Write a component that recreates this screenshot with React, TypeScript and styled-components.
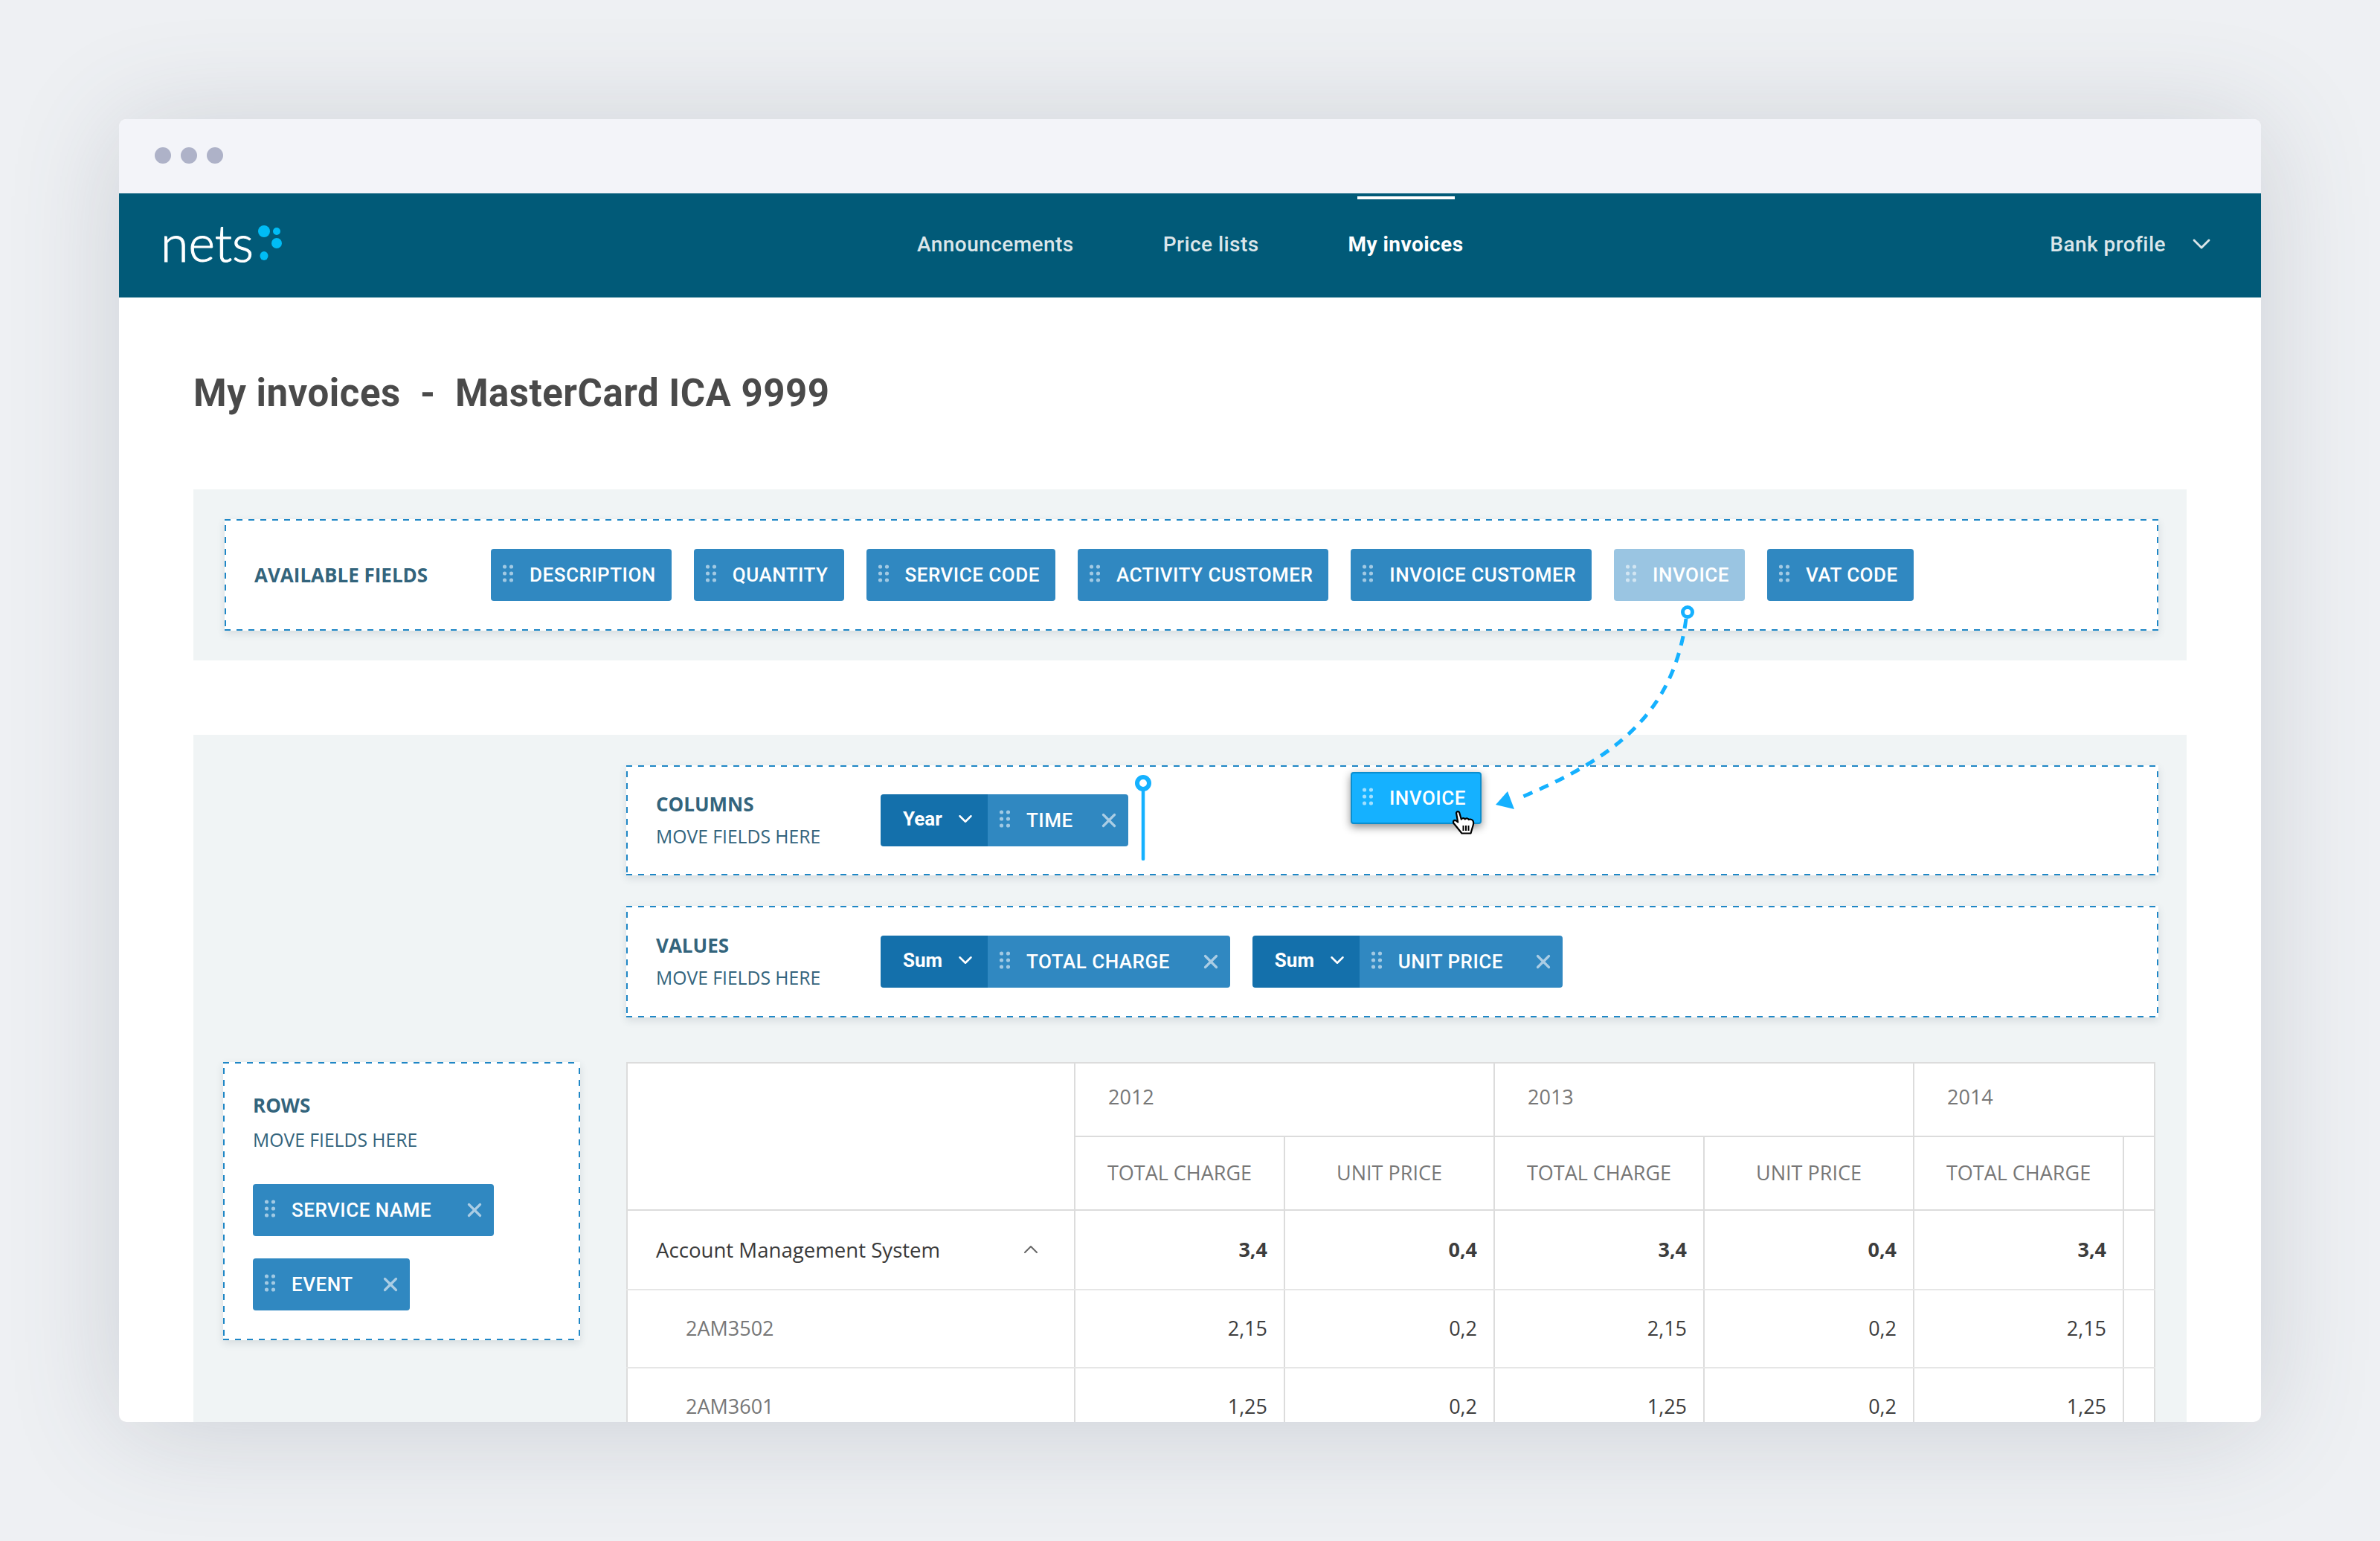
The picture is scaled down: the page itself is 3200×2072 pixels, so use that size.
import React from "react";
import styled, { createGlobalStyle } from "styled-components";
import { ChevronDown, ChevronUp, X } from "lucide-react";

const GlobalStyle = createGlobalStyle`
  html, body {
    margin: 0;
    padding: 0;
    background: #eef0f3;
  }
  * {
    box-sizing: border-box;
  }
`;

const BLUE = "#3088c1";
const DASH = "#1f87c6";
const DARK_BLUE = "#1470ab";
const BRIGHT = "#15b1ff";
const LABEL = "#33647c";

const Page = styled.div`
  width: 3200px;
  height: 2072px;
  padding: 160px;
  background: #eef0f3;
  overflow: hidden;
`;

const Window = styled.div`
  position: relative;
  width: 2880px;
  height: 1752px;
  display: flex;
  flex-direction: column;
  border-radius: 10px;
  background: #fff;
  overflow: hidden;
  box-shadow: 0 10px 150px rgba(70, 78, 100, 0.2);
`;

const TitleBar = styled.div`
  flex: 0 0 100px;
  display: flex;
  align-items: center;
  gap: 13px;
  padding: 0 0 2px 48px;
  background: #f3f4f9;
`;

const WindowDot = styled.span`
  width: 22px;
  height: 22px;
  border-radius: 50%;
  background: #aeb2c8;
`;

const Nav = styled.nav`
  flex: 0 0 140px;
  display: flex;
  align-items: center;
  padding: 0 60px 4px 56px;
  background: #015a78;
  font-family: Roboto, sans-serif;
  font-size: 28px;
  font-weight: 500;
  letter-spacing: 0.45px;
  color: #dbe6ea;
`;

const Logo = styled.div`
  display: flex;
  align-items: center;
  gap: 4px;
  width: 1017px;
  padding-bottom: 4px;
  font-family: Lato, sans-serif;
  font-weight: 300;
  font-size: 68px;
  line-height: 1;
  letter-spacing: 0;
  color: #fff;
  -webkit-text-stroke: 1px #fff;
`;

const NavLinks = styled.div`
  display: flex;
  gap: 120px;
`;

const NavLink = styled.a<{ $active?: boolean }>`
  position: relative;
  color: ${(props) => (props.$active ? "#fff" : "#dbe6ea")};
  font-weight: ${(props) => (props.$active ? 700 : 500)};

  ${(props) =>
    props.$active &&
    `&::before {
      content: "";
      position: absolute;
      left: 12px;
      right: 11px;
      top: -48px;
      height: 4px;
      background: #fff;
    }`}
`;

const Profile = styled.div`
  margin-left: auto;
  display: flex;
  align-items: center;
  gap: 28px;
`;

const Content = styled.main`
  flex: 1;
  min-height: 0;
  display: flex;
  flex-direction: column;
  padding: 99px 100px 0;
`;

const Title = styled.h1`
  margin: 0 0 99px;
  font-family: Roboto, sans-serif;
  font-size: 51px;
  font-weight: 700;
  line-height: 60px;
  letter-spacing: 0.5px;
  white-space: pre;
  color: #4a4a4a;
`;

const AvailablePanel = styled.section`
  flex: 0 0 230px;
  display: flex;
  padding: 40px 38px 40px 42px;
  background: #f0f4f5;
  margin-bottom: 100px;
`;

const WorkPanel = styled.section`
  flex: 1;
  min-height: 0;
  display: grid;
  grid-template-columns: 480px 2060px;
  grid-template-rows: 148px 150px auto;
  column-gap: 62px;
  row-gap: 41px;
  padding: 41px 38px 0 40px;
  background: #f0f4f5;
  overflow: hidden;
`;

const DropZone = styled.div`
  position: relative;
  flex: 1;
  grid-column: 2;
  display: flex;
  align-items: center;
  padding-left: 40px;
  background-color: #fff;
  background-image: linear-gradient(90deg, ${DASH} 8px, transparent 8px),
    linear-gradient(90deg, ${DASH} 8px, transparent 8px),
    linear-gradient(0deg, ${DASH} 8px, transparent 8px),
    linear-gradient(0deg, ${DASH} 8px, transparent 8px);
  background-size: 16px 2px, 16px 2px, 2px 16px, 2px 16px;
  background-position: 0 0, 0 100%, 0 0, 100% 0;
  background-repeat: repeat-x, repeat-x, repeat-y, repeat-y;
  box-shadow: 0 4px 10px rgba(60, 80, 90, 0.14);
`;

const RowsZone = styled(DropZone)`
  grid-column: 1;
  grid-row: 3;
  flex-direction: column;
  align-items: flex-start;
  height: 374px;
  margin-top: 19px;
  padding: 43px 40px 40px;
`;

const LabelBlock = styled.div<{ $width?: number; $gap?: number }>`
  flex: 0 0 ${(props) => (props.$width ? `${props.$width}px` : "auto")};
  display: flex;
  flex-direction: column;
  gap: ${(props) => props.$gap ?? 14}px;
`;

const FieldLabel = styled.div`
  font-family: "Open Sans", sans-serif;
  font-size: 26px;
  line-height: 30px;
  font-weight: 700;
  color: ${LABEL};
`;

const FieldHint = styled.div`
  font-family: "Open Sans", sans-serif;
  font-size: 24.7px;
  line-height: 30px;
  color: ${LABEL};
`;

const ChipRow = styled.div`
  display: flex;
  gap: 30px;
`;

const ChipStack = styled.div`
  display: flex;
  flex-direction: column;
  align-items: flex-start;
  gap: 30px;
  margin-top: 44px;
`;

const Chip = styled.div<{ $faded?: boolean }>`
  height: 70px;
  display: flex;
  align-items: center;
  padding: 0 21px 0 16px;
  border-radius: 4px;
  background: ${(props) => (props.$faded ? "#9ac5e2" : BLUE)};
  font-family: Roboto, sans-serif;
  font-size: 26px;
  font-weight: 500;
  letter-spacing: 0.5px;
  color: #fff;
`;

const DragChip = styled(Chip)`
  position: absolute;
  left: 974px;
  top: 9px;
  width: 176px;
  background: ${BRIGHT};
  border: 2px solid #0a8ecf;
  padding-left: 14px;
  box-shadow: 0 4px 12px rgba(0, 0, 0, 0.45);
`;

const HandCursor = styled.svg`
  position: absolute;
  left: 1111px;
  top: 61px;
`;

const ChipGroup = styled.div`
  display: flex;
  height: 70px;
  border-radius: 4px;
  overflow: hidden;

  ${Chip} {
    border-radius: 0;
  }
`;

const GroupRow = styled.div`
  display: flex;
  gap: 30px;
`;

const AggregateSelect = styled.div`
  display: flex;
  align-items: center;
  gap: 16px;
  width: 144px;
  padding: 0 0 4px 30px;
  background: ${DARK_BLUE};
  font-family: Roboto, sans-serif;
  font-size: 26px;
  font-weight: 700;
  color: #fff;
`;

const GripIcon = styled.svg`
  flex: 0 0 auto;
  margin-right: 22px;
  margin-top: -4px;
`;

const Remove = styled.span<{ $gap: number }>`
  display: flex;
  margin-left: ${(props) => props.$gap}px;
  margin-right: -10px;
  color: #abcde4;
`;

const InsertMarker = styled.svg`
  position: absolute;
  left: 683px;
  top: 10px;
`;

const FlightPath = styled.svg`
  position: absolute;
  left: 0;
  top: 0;
  pointer-events: none;
`;

const TableWrap = styled.div`
  grid-column: 2;
  grid-row: 3;
  margin-top: 19px;
  width: 2054px;
`;

const Table = styled.table`
  width: 2054px;
  table-layout: fixed;
  border-collapse: collapse;
  background: #fff;
  font-family: "Open Sans", sans-serif;
  font-size: 27px;
`;

const YearCell = styled.th`
  padding: 0 0 8px 44px;
  height: 99px;
  border: 2px solid #dcdcdc;
  text-align: left;
  font-weight: 400;
  color: #777;
`;

const MeasureCell = styled.th`
  padding: 0 0 2px;
  height: 99px;
  border: 2px solid #dcdcdc;
  text-align: center;
  font-weight: 400;
  color: #777;
`;

const NameCell = styled.td<{ $child?: boolean }>`
  padding: 0 0 2px ${(props) => (props.$child ? 78 : 38)}px;
  border: 2px solid #dcdcdc;
  border-bottom-color: #e6e6e6;
  font-size: ${(props) => (props.$child ? 27 : 27.6)}px;
  color: ${(props) => (props.$child ? "#777" : "#3a3a3a")};
`;

const NameInner = styled.div`
  display: flex;
  align-items: center;
  justify-content: space-between;
  padding-right: 42px;
`;

const NumCell = styled.td<{ $bold?: boolean }>`
  padding: 0 22px 2px 0;
  border: 2px solid #dcdcdc;
  border-bottom-color: #e6e6e6;
  text-align: right;
  font-weight: ${(props) => (props.$bold ? 700 : 400)};
  color: #3d3d3d;
`;

const BodyRow = styled.tr<{ $height: number }>`
  height: ${(props) => props.$height}px;
`;

const Grip = ({ opacity = 0.55 }: { opacity?: number }) => (
  <GripIcon width="14" height="24" viewBox="0 0 14 24">
    {[3, 12, 21].map((y) =>
      [2.5, 11.5].map((x) => (
        <circle key={`${x}-${y}`} cx={x} cy={y} r="2.6" fill="#fff" opacity={opacity} />
      ))
    )}
  </GripIcon>
);

const Field = ({ name, faded }: { name: string; faded?: boolean }) => (
  <Chip $faded={faded}>
    <Grip />
    {name}
  </Chip>
);

const Removable = ({ name, gap }: { name: string; gap: number }) => (
  <Chip>
    <Grip />
    {name}
    <Remove $gap={gap}>
      <X size={30} strokeWidth={2.6} />
    </Remove>
  </Chip>
);

const Grouped = ({ mode, name, gap }: { mode: string; name: string; gap: number }) => (
  <ChipGroup>
    <AggregateSelect>
      {mode}
      <ChevronDown size={30} strokeWidth={2} />
    </AggregateSelect>
    <Removable name={name} gap={gap} />
  </ChipGroup>
);

const available = ["DESCRIPTION", "QUANTITY", "SERVICE CODE", "ACTIVITY CUSTOMER", "INVOICE CUSTOMER", "INVOICE", "VAT CODE"];

const rows = [
  { name: "2AM3502", total: "2,15", height: 105 },
  { name: "2AM3601", total: "1,25", height: 104 },
];

const App: React.FC = () => (
  <Page>
    <GlobalStyle />
    <Window>
      <TitleBar>
        <WindowDot />
        <WindowDot />
        <WindowDot />
      </TitleBar>
      <Nav>
        <Logo>
          nets
          <svg width="44" height="48" viewBox="0 0 44 48">
            <ellipse cx="10" cy="9" rx="8" ry="8" fill="#00bcf5" />
            <circle cx="27" cy="9" r="5" fill="#00bcf5" />
            <ellipse cx="27" cy="25" rx="7" ry="7" fill="#00bcf5" />
            <ellipse cx="10" cy="42" rx="5.5" ry="6" fill="#00bcf5" />
          </svg>
        </Logo>
        <NavLinks>
          <NavLink>Announcements</NavLink>
          <NavLink>Price lists</NavLink>
          <NavLink $active>My invoices</NavLink>
        </NavLinks>
        <Profile>
          Bank profile
          <ChevronDown size={40} strokeWidth={1.7} />
        </Profile>
      </Nav>
      <Content>
        <Title>{"My invoices  -  MasterCard ICA 9999"}</Title>
        <AvailablePanel>
          <DropZone>
            <LabelBlock $width={318}>
              <FieldLabel>AVAILABLE FIELDS</FieldLabel>
            </LabelBlock>
            <ChipRow>
              {available.map((name) => (
                <Field key={name} name={name} faded={name === "INVOICE"} />
              ))}
            </ChipRow>
          </DropZone>
        </AvailablePanel>
        <WorkPanel>
          <DropZone>
            <LabelBlock $width={302}>
              <FieldLabel>COLUMNS</FieldLabel>
              <FieldHint>MOVE FIELDS HERE</FieldHint>
            </LabelBlock>
            <Grouped mode="Year" name="TIME" gap={33} />
            <InsertMarker width="24" height="118" viewBox="0 0 24 118">
              <circle cx="12" cy="14" r="8" fill="#fff" stroke={BRIGHT} strokeWidth="6" />
              <line x1="12" y1="22" x2="12" y2="116" stroke={BRIGHT} strokeWidth="4.5" strokeLinecap="round" />
            </InsertMarker>
            <DragChip>
              <Grip opacity={0.6} />
              INVOICE
            </DragChip>
            <HandCursor width="32" height="34" viewBox="0 0 32 34">
              <path
                d="M5 3c.6-2.400 3.400-2.500 4.200-.3l2.600 9c.8-2 4-2.200 5-.2 1-1.600 4-1.400 5 .6 1.400-1 4.500-.4 5.700 1.700.8 1.600.8 3.400.3 5.200l-3.300 11.500H12.500L1.200 16.500c-1.200-1.800 1-4.300 3-3.300l3 2.300z"
                fill="#fff"
                stroke="#000"
                strokeWidth="2.200"
                strokeLinejoin="round"
              />
              <path d="M14.500 20v7M18 20v7M21.500 20v7" stroke="#000" strokeWidth="2" fill="none" />
            </HandCursor>
          </DropZone>
          <DropZone>
            <LabelBlock $width={302}>
              <FieldLabel>VALUES</FieldLabel>
              <FieldHint>MOVE FIELDS HERE</FieldHint>
            </LabelBlock>
            <GroupRow>
              <Grouped mode="Sum" name="TOTAL CHARGE" gap={40} />
              <Grouped mode="Sum" name="UNIT PRICE" gap={39} />
            </GroupRow>
          </DropZone>
          <RowsZone>
            <LabelBlock $gap={17}>
              <FieldLabel>ROWS</FieldLabel>
              <FieldHint>MOVE FIELDS HERE</FieldHint>
            </LabelBlock>
            <ChipStack>
              <Removable name="SERVICE NAME" gap={43} />
              <Removable name="EVENT" gap={35} />
            </ChipStack>
          </RowsZone>
          <TableWrap>
            <Table>
              <colgroup>
                <col style={{ width: 602 }} />
                <col style={{ width: 282 }} />
                <col style={{ width: 282 }} />
                <col style={{ width: 282 }} />
                <col style={{ width: 282 }} />
                <col style={{ width: 282 }} />
                <col style={{ width: 42 }} />
              </colgroup>
              <thead>
                <tr>
                  <YearCell rowSpan={2} />
                  <YearCell colSpan={2}>2012</YearCell>
                  <YearCell colSpan={2}>2013</YearCell>
                  <YearCell colSpan={2}>2014</YearCell>
                </tr>
                <tr>
                  <MeasureCell>TOTAL CHARGE</MeasureCell>
                  <MeasureCell>UNIT PRICE</MeasureCell>
                  <MeasureCell>TOTAL CHARGE</MeasureCell>
                  <MeasureCell>UNIT PRICE</MeasureCell>
                  <MeasureCell>TOTAL CHARGE</MeasureCell>
                  <MeasureCell />
                </tr>
              </thead>
              <tbody>
                <BodyRow $height={107}>
                  <NameCell>
                    <NameInner>
                      Account Management System
                      <ChevronUp size={32} strokeWidth={1.500} color="#666" />
                    </NameInner>
                  </NameCell>
                  <NumCell $bold>3,4</NumCell>
                  <NumCell $bold>0,4</NumCell>
                  <NumCell $bold>3,4</NumCell>
                  <NumCell $bold>0,4</NumCell>
                  <NumCell $bold>3,4</NumCell>
                  <NumCell />
                </BodyRow>
                {rows.map((row) => (
                  <BodyRow key={row.name} $height={row.height}>
                    <NameCell $child>{row.name}</NameCell>
                    <NumCell>{row.total}</NumCell>
                    <NumCell>0,2</NumCell>
                    <NumCell>{row.total}</NumCell>
                    <NumCell>0,2</NumCell>
                    <NumCell>{row.total}</NumCell>
                    <NumCell />
                  </BodyRow>
                ))}
              </tbody>
            </Table>
          </TableWrap>
        </WorkPanel>
      </Content>
      <FlightPath width="2880" height="1752" viewBox="160 160 2880 1752">
        <circle cx="2269" cy="823" r="6.500" fill="#fff" stroke={BRIGHT} strokeWidth="5" />
        <path
          d="M2267 832C2250 960 2170 1020 2043 1073"
          fill="none"
          stroke={BRIGHT}
          strokeWidth="5"
          strokeDasharray="13 10.500"
        />
        <polygon points="2027,1064 2011,1082 2036,1088" fill={BRIGHT} />
      </FlightPath>
    </Window>
  </Page>
);

export default App;
